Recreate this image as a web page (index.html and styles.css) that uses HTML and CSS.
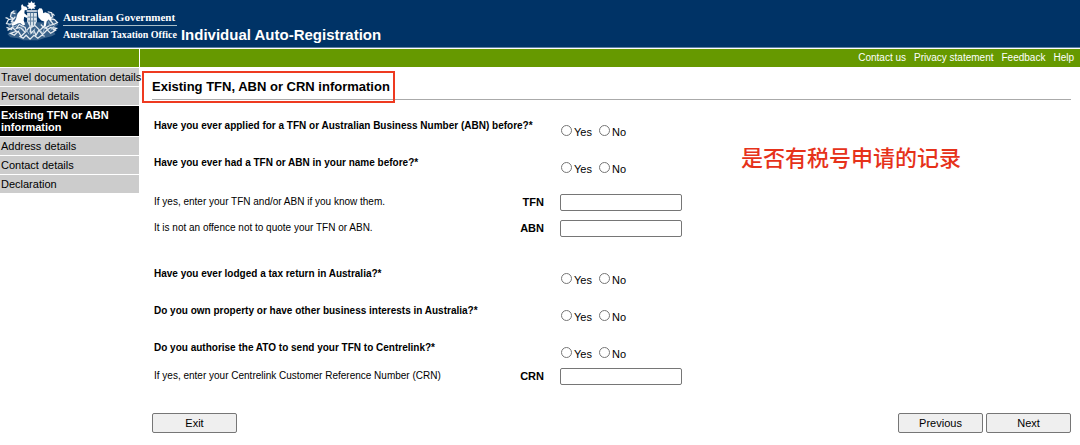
FILE: index.html
```html
<!DOCTYPE html>
<html lang="en">
<head>
<meta charset="utf-8">
<meta name="viewport" content="width=device-width, initial-scale=1">
<title>Individual Auto-Registration</title>
<link rel="stylesheet" href="styles.css">
</head>
<body>
<header class="banner">
  <svg class="crest" viewBox="0 0 63 48" aria-hidden="true">
    <path fill="#7f9cb6" opacity=".45" d="M12 11l4-1 1 8 4 4 22 1 6-3 0-7 4 1 2 6 4 5-4 3-1 4 2 3-4 2-8 2-6 2H23l-5-2-8-1-3-3 3-4-3-3 4-4-1-5z"/>
    <g fill="none" stroke="#e5ebf0" stroke-width="1.300">
      <path d="M14 11l-3 2-1 4 3 2-5 1-2 4 4 1M11 13l4 1M8 19l-3-1M15 17l-4 5 4 1M9 25l5-2M6 28l5 2 2-4M48 12l4 1 1 4-3 2 5 1 3 3-4 2M53 14l2 2M50 20l4 5-4 1M52 28l5 1-3 2"/>
      <path d="M7 31l5-3 4 4-6 2 4 2 4-4 3 5 4-4-5-5-4 1 3-4 6 3 1 4 4-5 1 7 3-3 2 5 3-5 4 4 5-5-4-3-4 4-5-5-4 2-1 5M47 31l4-3 5 3-5 3-4-4M41 25l4 4 5-3M19 37l4 2 3-3 4 4 4-4 4 3 4-3 3 1"/>
    </g>
    <g fill="none" stroke="#9db6cc">
      <path d="M11 23l2 5 4-2M19 31l2-4 3 4M26 30l3 5M35 29l-2 6M40 30l3 4 2-6M49 22l1 4M7 23l2 4M55 26l-4 5"/>
    </g>
    <path fill="#dbe4eb" d="M27 13h10v9l-2 4-3 2-3-2-2-4z"/>
    <path fill="none" stroke="#6485a2" d="M27 17.500h10M30.500 13v13M33.500 13v13M28 21.500h8"/>
    <g fill="#fff">
      <path d="M31.500 1l1.200 2 2.300-.5-.6 2.200 2 1.300-2 1.200.6 2-2.300-.6-1.200 1.400-1.200-1.400-2.300.6.600-2-2-1.200 2-1.300-.6-2.200 2.300.5z"/>
      <path d="M26.500 10.500h10.500v1.500h-10.500z"/>
      <path d="M22 4l1.500 2.500 2.500.5 1.500 2-.5 1.200-2.500.3-.3 3 3.500 3-.7 2-3-1.500-.5 4 1.500 4-2 1-3-2.500-2.500.5-3 1.500-3 .5-.2-1.600 2-1 2.400-4 1.500-5.500 4-4.500-.3-3.500z"/>
      <path d="M37.500 11l2-2.500 2.500.2 1 1.800.5 3 2-1 4 1.500 2 4 .5 4-3-2-2 2-1 5h-2l.5-5-3-1-3-3.500-.5-5z"/>
    </g>
  </svg>
  <div class="agency">
    <span class="government">Australian Government</span>
    <span class="office">Australian Taxation Office</span>
  </div>
  <h1 class="title">Individual Auto-Registration</h1>
</header>
<nav class="toolbar" aria-label="Help links">
  <a href="#contact">Contact us</a>
  <a href="#privacy">Privacy statement</a>
  <a href="#feedback">Feedback</a>
  <a href="#help">Help</a>
</nav>
<div class="page">
  <nav class="steps" aria-label="Registration steps">
    <a href="#travel">Travel documentation details</a>
    <a href="#personal">Personal details</a>
    <a class="current" href="#existing" aria-current="step">Existing TFN or ABN information</a>
    <a href="#address">Address details</a>
    <a href="#contact-details">Contact details</a>
    <a href="#declaration">Declaration</a>
  </nav>
  <main class="content">
    <h2 class="heading"><span class="marked">Existing TFN, ABN or CRN information</span></h2>
    <form class="form">
      <section class="group">
        <div class="row question" role="radiogroup" aria-labelledby="q-applied">
          <span class="text" id="q-applied">Have you ever applied for a TFN or Australian Business Number (ABN) before?*</span>
          <div class="choices">
            <label><input type="radio" name="applied">Yes</label>
            <label><input type="radio" name="applied">No</label>
          </div>
        </div>
        <div class="row question" role="radiogroup" aria-labelledby="q-had">
          <span class="text" id="q-had">Have you ever had a TFN or ABN in your name before?*</span>
          <div class="choices">
            <label><input type="radio" name="had">Yes</label>
            <label><input type="radio" name="had">No</label>
          </div>
        </div>
        <div class="row field spaced">
          <span class="text">If yes, enter your TFN and/or ABN if you know them.</span>
          <label class="code" for="tfn">TFN</label>
          <input class="entry" id="tfn" type="text">
        </div>
        <div class="row field">
          <span class="text">It is not an offence not to quote your TFN or ABN.</span>
          <label class="code" for="abn">ABN</label>
          <input class="entry" id="abn" type="text">
        </div>
      </section>
      <section class="group">
        <div class="row question" role="radiogroup" aria-labelledby="q-lodged">
          <span class="text" id="q-lodged">Have you ever lodged a tax return in Australia?*</span>
          <div class="choices">
            <label><input type="radio" name="lodged">Yes</label>
            <label><input type="radio" name="lodged">No</label>
          </div>
        </div>
        <div class="row question" role="radiogroup" aria-labelledby="q-property">
          <span class="text" id="q-property">Do you own property or have other business interests in Australia?*</span>
          <div class="choices">
            <label><input type="radio" name="property">Yes</label>
            <label><input type="radio" name="property">No</label>
          </div>
        </div>
        <div class="row question" role="radiogroup" aria-labelledby="q-authorise">
          <span class="text" id="q-authorise">Do you authorise the ATO to send your TFN to Centrelink?*</span>
          <div class="choices">
            <label><input type="radio" name="authorise">Yes</label>
            <label><input type="radio" name="authorise">No</label>
          </div>
        </div>
        <div class="row field">
          <span class="text">If yes, enter your Centrelink Customer Reference Number (CRN)</span>
          <label class="code" for="crn">CRN</label>
          <input class="entry" id="crn" type="text">
        </div>
      </section>
      <div class="actions">
        <button type="button">Exit</button>
        <button class="previous" type="button">Previous</button>
        <button type="submit">Next</button>
      </div>
    </form>
    <p class="note" lang="zh">是否有税号申请的记录</p>
  </main>
</div>
</body>
</html>
```
FILE: styles.css
```css
* {
  box-sizing: border-box;
}

body {
  margin: 0;
  background: #fff;
  color: #000;
  font: 11px/12px "Liberation Sans", Arial, sans-serif;
}

a {
  color: inherit;
  text-decoration: none;
}

.banner {
  display: flex;
  align-items: flex-start;
  height: 48px;
  background: #036;
  border-bottom: 1px solid #5f83a3;
  color: #fff;
}

.crest {
  flex: none;
  width: 63px;
  height: 47px;
}

.agency {
  display: flex;
  flex-direction: column;
  padding-top: 10px;
  font: bold 11px/15px "Liberation Serif", "Times New Roman", serif;
  white-space: nowrap;
}

.office {
  padding-top: 1px;
  border-top: 1px solid #a9bfc9;
  font-size: 10px;
}

.title {
  margin: 0;
  padding: 25px 0 0 4px;
  font-size: 15px;
  line-height: 20px;
}

.toolbar {
  display: flex;
  justify-content: flex-end;
  gap: 8px;
  height: 18px;
  margin-top: 1px;
  padding: 3px 6px 0 0;
  background: linear-gradient(#fff, #fff) 139px 0 / 1px 100% no-repeat #690;
  color: #fff;
  font-size: 10px;
}

.page {
  display: flex;
  align-items: flex-start;
}

.steps {
  display: flex;
  flex: none;
  flex-direction: column;
  gap: 1px;
  width: 139px;
  padding-top: 1px;
  white-space: nowrap;
}

.steps a {
  padding: 3px 0 3px 1px;
  background: #ccc;
}

.steps .current {
  background: #000;
  color: #fff;
  font-weight: bold;
  white-space: normal;
}

.content {
  position: relative;
  flex: 1;
  padding: 12px 9px 10px 13px;
}

.heading {
  margin: 0;
  padding-bottom: 4px;
  border-bottom: 1px solid #aaa;
  font-size: 13px;
  line-height: 16px;
}

.marked {
  position: relative;
}

.marked::after {
  position: absolute;
  inset: -8px -5px -9px -10px;
  border: 2px solid #ee3a20;
  content: "";
}

.form {
  padding-top: 17px;
}

.group {
  margin: 0 0 24px 2px;
}

.row {
  display: grid;
  grid-template-columns: 350px 40px auto;
}

.question {
  grid-template-columns: 407px auto;
  height: 24px;
  line-height: 18px;
  font-weight: bold;
}

.question + .question {
  margin-top: 13px;
}

.text {
  font-size: 10px;
}

.choices {
  display: flex;
  gap: 7px;
  padding-top: 5px;
  font-weight: normal;
}

.choices label {
  display: flex;
  align-items: center;
}

.choices input {
  appearance: none;
  width: 11px;
  height: 11px;
  margin: 0 2px 2px 0;
  border: 1px solid #767676;
  border-radius: 50%;
}

.field {
  align-items: center;
  height: 26px;
}

.spaced {
  margin-top: 11px;
}

.code {
  font-weight: bold;
  text-align: right;
}

.entry {
  width: 122px;
  height: 17px;
  margin-left: 16px;
  padding: 1px 2px;
  border: 1px solid #767676;
  border-radius: 2px;
  font: inherit;
}

.actions {
  display: flex;
  gap: 3px;
}

.actions button {
  width: 85px;
  height: 20px;
  padding: 0;
  border: 1px solid #767676;
  border-radius: 2px;
  background: #efefef;
  color: #000;
  font: inherit;
}

.actions .previous {
  margin-left: auto;
}

.note {
  position: absolute;
  top: 73px;
  left: 602px;
  margin: 0;
  color: #e6321a;
  font: 500 22px/32px "Noto Sans CJK SC", sans-serif;
  white-space: nowrap;
}
```
